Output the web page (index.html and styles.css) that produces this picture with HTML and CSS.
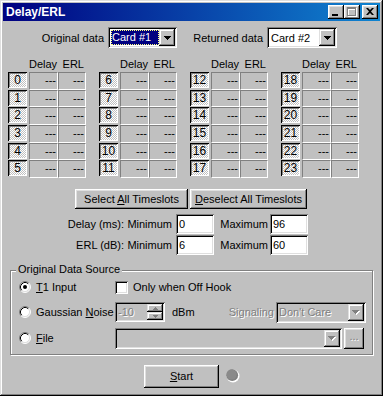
FILE: index.html
```html
<!DOCTYPE html>
<html>
<head>
<meta charset="utf-8">
<link rel="stylesheet" href="styles.css">
</head>
<body>
<div class="window">
  <div class="titlebar">
    <span class="title">Delay/ERL</span>
    <div class="tbtns">
      <span class="tbtn"><svg width="16" height="14" viewBox="0 0 16 14"><rect x="4" y="9" width="6" height="2" fill="#000"/></svg></span>
      <span class="tbtn"><svg width="16" height="14" viewBox="0 0 16 14"><path d="M4 3h9v9h-9zM5 5v6h7v-6z" fill="#fff" fill-rule="evenodd"/><path d="M3 2h9v9h-9zM4 4v6h7v-6z" fill="#808080" fill-rule="evenodd"/></svg></span>
      <span class="tbtn close"><svg width="16" height="14" viewBox="0 0 16 14"><path d="M4 3h2l2 2 2-2h2l-3 3.5 3 3.5h-2l-2-2-2 2h-2l3-3.5z" fill="#000"/></svg></span>
    </div>
  </div>
  <div class="content">
    <div class="datarow">
      <span class="dlabel l1">Original data</span>
      <div class="combo c1"><span class="ctext"><span class="sel">Card #1</span></span><span class="cbtn"><svg width="7" height="4" viewBox="0 0 7 4"><path d="M0 0h7v1h-1v1h-1v1h-1v1h-1v-1h-1v-1h-1v-1h-1z" fill="#000"/></svg></span></div>
      <span class="dlabel l2">Returned data</span>
      <div class="combo c2"><span class="ctext">Card #2</span><span class="cbtn"><svg width="7" height="4" viewBox="0 0 7 4"><path d="M0 0h7v1h-1v1h-1v1h-1v1h-1v-1h-1v-1h-1v-1h-1z" fill="#000"/></svg></span></div>
    </div>

    <div class="slots">
      <div class="col">
        <div class="row hdr"><span></span><span class="h">Delay</span><span class="h">ERL</span></div>
        <div class="row"><span class="num">0</span><span class="cell">---</span><span class="cell">---</span></div>
        <div class="row"><span class="num">1</span><span class="cell">---</span><span class="cell">---</span></div>
        <div class="row"><span class="num">2</span><span class="cell">---</span><span class="cell">---</span></div>
        <div class="row"><span class="num">3</span><span class="cell">---</span><span class="cell">---</span></div>
        <div class="row"><span class="num">4</span><span class="cell">---</span><span class="cell">---</span></div>
        <div class="row"><span class="num">5</span><span class="cell">---</span><span class="cell">---</span></div>
      </div>
      <div class="col">
        <div class="row hdr"><span></span><span class="h">Delay</span><span class="h">ERL</span></div>
        <div class="row"><span class="num">6</span><span class="cell">---</span><span class="cell">---</span></div>
        <div class="row"><span class="num">7</span><span class="cell">---</span><span class="cell">---</span></div>
        <div class="row"><span class="num">8</span><span class="cell">---</span><span class="cell">---</span></div>
        <div class="row"><span class="num">9</span><span class="cell">---</span><span class="cell">---</span></div>
        <div class="row"><span class="num">10</span><span class="cell">---</span><span class="cell">---</span></div>
        <div class="row"><span class="num">11</span><span class="cell">---</span><span class="cell">---</span></div>
      </div>
      <div class="col">
        <div class="row hdr"><span></span><span class="h">Delay</span><span class="h">ERL</span></div>
        <div class="row"><span class="num">12</span><span class="cell">---</span><span class="cell">---</span></div>
        <div class="row"><span class="num">13</span><span class="cell">---</span><span class="cell">---</span></div>
        <div class="row"><span class="num">14</span><span class="cell">---</span><span class="cell">---</span></div>
        <div class="row"><span class="num">15</span><span class="cell">---</span><span class="cell">---</span></div>
        <div class="row"><span class="num">16</span><span class="cell">---</span><span class="cell">---</span></div>
        <div class="row"><span class="num">17</span><span class="cell">---</span><span class="cell">---</span></div>
      </div>
      <div class="col">
        <div class="row hdr"><span></span><span class="h">Delay</span><span class="h">ERL</span></div>
        <div class="row"><span class="num">18</span><span class="cell">---</span><span class="cell">---</span></div>
        <div class="row"><span class="num">19</span><span class="cell">---</span><span class="cell">---</span></div>
        <div class="row"><span class="num">20</span><span class="cell">---</span><span class="cell">---</span></div>
        <div class="row"><span class="num">21</span><span class="cell">---</span><span class="cell">---</span></div>
        <div class="row"><span class="num">22</span><span class="cell">---</span><span class="cell">---</span></div>
        <div class="row"><span class="num">23</span><span class="cell">---</span><span class="cell">---</span></div>
      </div>
    </div>

    <div class="btnrow">
      <span class="btn b1"><span>Select <u>A</u>ll Timeslots</span></span>
      <span class="btn b2"><span><u>D</u>eselect All Timeslots</span></span>
    </div>

    <div class="limits">
      <span class="lab">Delay (ms):</span><span class="mn">Minimum</span><span class="field">0</span><span class="mx">Maximum</span><span class="field">96</span>
      <span class="lab">ERL (dB):</span><span class="mn">Minimum</span><span class="field">6</span><span class="mx">Maximum</span><span class="field">60</span>
    </div>

    <div class="group">
      <span class="legend">Original Data Source</span>
      <div class="grow r1">
        <span class="opt"><svg class="radio" width="12" height="12" viewBox="0 0 12 12"><circle cx="6" cy="6" r="5" fill="#fff"/><path d="M2.11 9.89A5.5 5.5 0 0 1 9.89 2.11" stroke="#808080" fill="none"/><path d="M9.89 2.11A5.5 5.5 0 0 1 2.11 9.89" stroke="#fff" fill="none"/><path d="M2.82 9.18A4.5 4.5 0 0 1 9.18 2.82" stroke="#000" fill="none"/><path d="M9.18 2.82A4.5 4.5 0 0 1 2.82 9.18" stroke="#dfdfdf" fill="none"/><circle cx="6" cy="6" r="2" fill="#000"/></svg><span><u>T</u>1 Input</span></span>
        <span class="check"></span><span class="chklabel">Only when Off Hook</span>
      </div>
      <div class="grow r2">
        <span class="opt"><svg class="radio" width="12" height="12" viewBox="0 0 12 12"><circle cx="6" cy="6" r="5" fill="#fff"/><path d="M2.11 9.89A5.5 5.5 0 0 1 9.89 2.11" stroke="#808080" fill="none"/><path d="M9.89 2.11A5.5 5.5 0 0 1 2.11 9.89" stroke="#fff" fill="none"/><path d="M2.82 9.18A4.5 4.5 0 0 1 9.18 2.82" stroke="#000" fill="none"/><path d="M9.18 2.82A4.5 4.5 0 0 1 2.82 9.18" stroke="#dfdfdf" fill="none"/></svg><span>Gaussian <u>N</u>oise</span></span>
        <span class="spin"><span class="stext dis">-10</span><span class="sbtns"><span class="sb"><svg width="5" height="3" viewBox="0 0 5 3"><path d="M2 0h1v1h1v1h1v1h-5v-1h1v-1h1z" fill="#808080"/></svg></span><span class="sb"><svg width="5" height="3" viewBox="0 0 5 3"><path d="M0 0h5v1h-1v1h-1v1h-1v-1h-1v-1h-1z" fill="#808080"/></svg></span></span></span>
        <span class="dbm">dBm</span>
        <span class="sig dis">Signaling</span>
        <div class="combo dcombo c3"><span class="ctext dis">Don't Care</span><span class="cbtn"><svg width="8" height="5" viewBox="0 0 8 5"><path d="M1 1h7v1h-1v1h-1v1h-1v1h-1v-1h-1v-1h-1v-1h-1z" fill="#fff"/><path d="M0 0h7v1h-1v1h-1v1h-1v1h-1v-1h-1v-1h-1v-1h-1z" fill="#808080"/></svg></span></div>
      </div>
      <div class="grow r3">
        <span class="opt"><svg class="radio" width="12" height="12" viewBox="0 0 12 12"><circle cx="6" cy="6" r="5" fill="#fff"/><path d="M2.11 9.89A5.5 5.5 0 0 1 9.89 2.11" stroke="#808080" fill="none"/><path d="M9.89 2.11A5.5 5.5 0 0 1 2.11 9.89" stroke="#fff" fill="none"/><path d="M2.82 9.18A4.5 4.5 0 0 1 9.18 2.82" stroke="#000" fill="none"/><path d="M9.18 2.82A4.5 4.5 0 0 1 2.82 9.18" stroke="#dfdfdf" fill="none"/></svg><span><u>F</u>ile</span></span>
        <div class="combo dcombo c4"><span class="ctext"></span><span class="cbtn"><svg width="8" height="5" viewBox="0 0 8 5"><path d="M1 1h7v1h-1v1h-1v1h-1v1h-1v-1h-1v-1h-1v-1h-1z" fill="#fff"/><path d="M0 0h7v1h-1v1h-1v1h-1v1h-1v-1h-1v-1h-1v-1h-1z" fill="#808080"/></svg></span></div>
        <span class="btn dots dis"><span>...</span></span>
      </div>
    </div>

    <div class="startrow">
      <span class="btn start"><span><u>S</u>tart</span></span>
      <svg class="led" width="14" height="14" viewBox="0 0 14 14"><circle cx="7" cy="7" r="6.5" fill="#fff"/><circle cx="6.2" cy="6.2" r="5.9" fill="#808080"/><circle cx="5.6" cy="5.6" r="5" fill="#8a8a8a"/></svg>
    </div>
  </div>
</div>
</body>
</html>
```

FILE: styles.css
```css
* { box-sizing: border-box; }
html, body { margin: 0; padding: 0; }
body {
  font-family: "Liberation Sans", Arial, sans-serif;
  font-size: 11px;
  color: #000;
  background: #c0c0c0;
}
u { text-decoration: underline; text-underline-offset: 1px; }

.window {
  width: 383px;
  height: 396px;
  padding: 3px;
  background: #c0c0c0;
  box-shadow: inset -1px -1px #000, inset 1px 1px #dfdfdf, inset -2px -2px #808080, inset 2px 2px #fff;
  display: flex;
  flex-direction: column;
}

.titlebar {
  height: 18px;
  background: linear-gradient(to right, #000080, #1084d0);
  display: flex;
  align-items: center;
  padding: 0 2px 0 3px;
  color: #fff;
}
.title { font-weight: bold; font-size: 12px; }
.tbtns { display: flex; margin-left: auto; }
.tbtn {
  width: 16px; height: 14px;
  background: #c0c0c0;
  box-shadow: inset -1px -1px #000, inset 1px 1px #fff, inset -2px -2px #808080, inset 2px 2px #dfdfdf;
  display: block;
}
.tbtn svg { display: block; }
.tbtn.close { margin-left: 2px; }

.content { flex: 1; display: flex; flex-direction: column; }

.dis { color: #808080; text-shadow: 1px 1px 0 #fff; }

/* data row */
.datarow { margin-top: 6px; height: 21px; display: flex; align-items: center; }
.dlabel { text-align: right; margin-right: 4px; }
.l1 { width: 101px; }
.l2 { width: 86px; }
.combo {
  height: 21px;
  background: #fff;
  box-shadow: inset 1px 1px #808080, inset -1px -1px #fff, inset 2px 2px #000, inset -2px -2px #dfdfdf;
  padding: 2px;
  display: flex;
}
.c1 { width: 69px; }
.c2 { width: 70px; }
.ctext { flex: 1; display: flex; align-items: center; padding-left: 1px; min-width: 0; }
.c2 .ctext { padding-left: 2px; }
.sel {
  background: #000080; color: #fff;
  outline: 1px dotted #ffff80; outline-offset: -1px;
  height: 15px; line-height: 15px; padding: 0 2px 0 1px;
  width: 48px;
}
.cbtn {
  width: 16px; height: 17px;
  background: #c0c0c0;
  box-shadow: inset -1px -1px #000, inset 1px 1px #dfdfdf, inset -2px -2px #808080, inset 2px 2px #fff;
  display: flex; align-items: center; justify-content: center;
}
.cbtn svg { display: block; }

/* slots grid */
.slots {
  margin-top: 8px;
  padding-left: 5px;
  display: grid;
  grid-template-columns: repeat(4, 91px);
}
.col { display: flex; flex-direction: column; }
.row { display: grid; grid-template-columns: 21px 29px 28px; height: 17.67px; }
.row.hdr { height: 16px; align-items: center; }
.h { text-align: right; padding-right: 2px; }
.num {
  width: 19px; height: 16px;
  background: repeating-conic-gradient(#fff 0 25%, #c0c0c0 0 50%) 0 0 / 2px 2px;
  box-shadow: inset 1px 1px #000, inset -1px -1px #fff, inset 2px 2px #808080;
  text-align: center;
  line-height: 16px;
  font-size: 12px;
}
.cell {
  border-top: 1px solid #808080;
  border-left: 1px solid #808080;
  border-right: 1px solid #fff;
  border-bottom: 1px solid #fff;
  text-align: right;
  padding-right: 1px;
  line-height: 15px;
}

/* buttons */
.btn {
  background: #c0c0c0;
  box-shadow: inset -1px -1px #000, inset 1px 1px #fff, inset -2px -2px #808080, inset 2px 2px #dfdfdf;
  display: flex; align-items: center; justify-content: center;
}
.btnrow { margin-top: 11px; padding-left: 72px; display: flex; gap: 2px; }
.b1 { width: 113px; height: 20px; }
.b2 { width: 117px; height: 20px; }

/* limits */
.limits {
  margin-top: 5px;
  display: grid;
  grid-template-columns: 121px 52px 38px 56px 38px;
  grid-template-rows: 20px 20px;
  row-gap: 1px;
  align-items: center;
}
.lab { text-align: right; }
.mn { text-align: right; padding-right: 4px; }
.mx { text-align: right; padding-right: 2px; }
.field {
  height: 20px;
  background: #fff;
  box-shadow: inset 1px 1px #808080, inset -1px -1px #fff, inset 2px 2px #000, inset -2px -2px #dfdfdf;
  padding: 0 3px;
  display: flex; align-items: center;
}

/* group */
.group {
  position: relative;
  margin-top: 15px;
  margin-left: 7px;
  width: 363px;
  height: 85px;
  border: 1px solid #808080;
  box-shadow: inset 1px 1px #fff, 1px 1px #fff;
  padding: 8px 6px 0 8px;
  display: flex;
  flex-direction: column;
}
.legend {
  position: absolute;
  top: -8px;
  left: 5px;
  padding: 0 2px;
  background: #c0c0c0;
  line-height: 13px;
}
.grow { display: flex; align-items: center; }
.r1 { height: 17px; }
.r2 { height: 21px; margin-top: 6px; }
.r3 { height: 21px; margin-top: 5px; }
.opt { width: 96px; display: flex; align-items: center; gap: 5px; }
.radio { display: block; flex: none; }
.check {
  width: 13px; height: 13px;
  background: #fff;
  box-shadow: inset 1px 1px #808080, inset -1px -1px #fff, inset 2px 2px #000, inset -2px -2px #dfdfdf;
}
.chklabel { margin-left: 5px; }

.spin {
  width: 50px; height: 20px;
  background: #c0c0c0;
  box-shadow: inset 1px 1px #808080, inset -1px -1px #fff, inset 2px 2px #000, inset -2px -2px #dfdfdf;
  padding: 2px;
  display: flex;
}
.stext { flex: 1; display: flex; align-items: center; padding-left: 1px; }
.sbtns { width: 16px; display: flex; flex-direction: column; }
.sb {
  height: 8px;
  background: #c0c0c0;
  box-shadow: inset -1px -1px #000, inset 1px 1px #dfdfdf, inset -2px -2px #808080, inset 2px 2px #fff;
  display: flex; align-items: center; justify-content: center;
}
.sb svg { display: block; }
.dbm { margin-left: 7px; }
.sig { margin-left: auto; margin-right: 2px; }
.dcombo { background: #c0c0c0; }
.c3 { width: 90px; }
.c4 { width: 227px; }
.dots { width: 20px; height: 21px; margin-left: 2px; padding-bottom: 4px; }

.startrow { margin-top: 10px; padding-left: 141px; display: flex; align-items: center; }
.start { width: 75px; height: 23px; }
.led { display: block; margin-left: 7px; }
```
